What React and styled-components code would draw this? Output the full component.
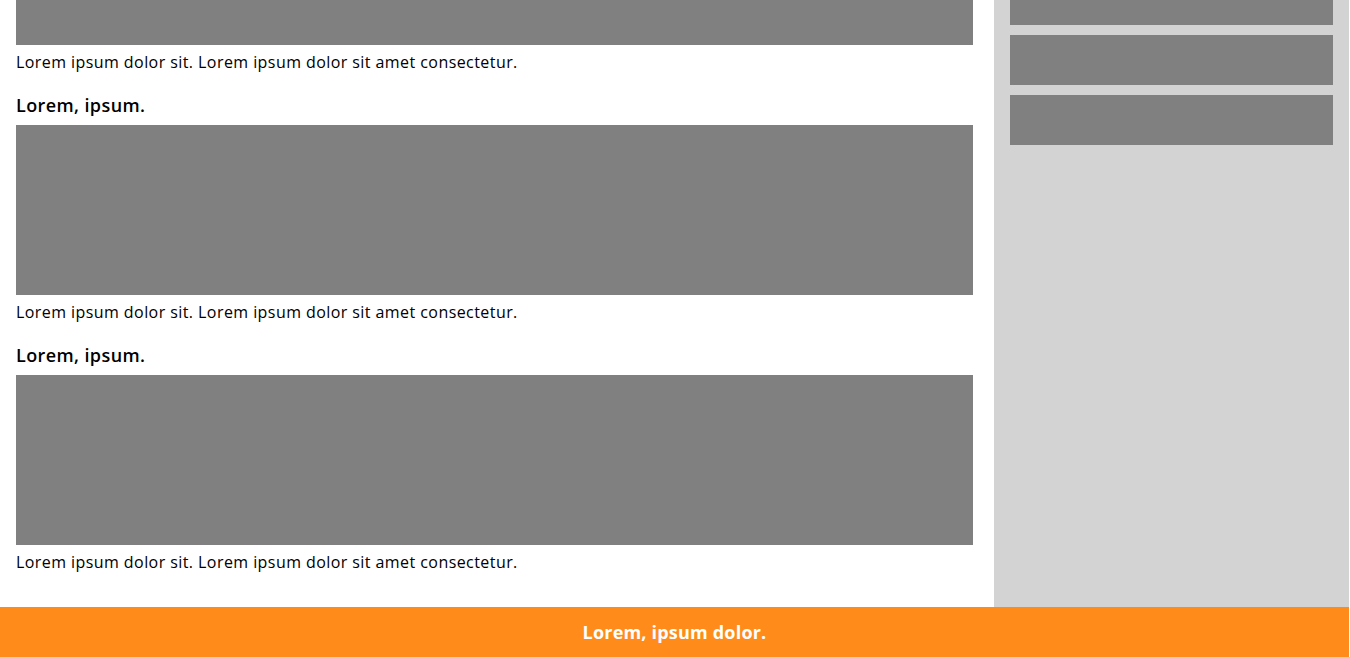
import styled, { createGlobalStyle } from 'styled-components'

const GlobalStyle = createGlobalStyle`
	* {
		box-sizing: border-box;
		margin: 0;
		padding: 0;
	}
	body {
		background: #fff;
		font-family: 'Open Sans', 'Liberation Sans', sans-serif;
		color: #000;
	}
`

const sections = [1, 2]

const App = () => {
	return (
		<Page>
			<GlobalStyle />
			<Layout>
				<Main>
					<Block height="45px" />
					<Caption>Lorem ipsum dolor sit. Lorem ipsum dolor sit amet consectetur.</Caption>
					{sections.map((s) => (
						<section key={s}>
							<Heading>Lorem, ipsum.</Heading>
							<Block height="170px" />
							<Caption>Lorem ipsum dolor sit. Lorem ipsum dolor sit amet consectetur.</Caption>
						</section>
					))}
				</Main>
				<Sidebar>
					<Tile height="25px" />
					<Tile />
					<Tile />
				</Sidebar>
			</Layout>
			<Footer>Lorem, ipsum dolor.</Footer>
		</Page>
	)
}

const Page = styled.div`
	width: 1349px;
	display: flex;
	flex-direction: column;
`

const Layout = styled.div`
	display: flex;
	height: 607px;
`

const Main = styled.main`
	width: 994px;
	padding: 0 21px 0 16px;
`

const Block = styled.div`
	background: #808080;
	height: ${(p) => p.height};
`

const Caption = styled.p`
	font-size: 16px;
	line-height: 24px;
	padding-top: 5px;
	letter-spacing: 0.43px;
`

const Heading = styled.h3`
	font-size: 18px;
	font-weight: 600;
	line-height: 27px;
	margin: 18px 0 6px;
	letter-spacing: 0.4px;
`

const Sidebar = styled.aside`
	flex: 1;
	background: #d3d3d3;
	padding: 0 16px;
	display: flex;
	flex-direction: column;
	gap: 10px;
`

const Tile = styled.div`
	background: #808080;
	height: ${(p) => p.height || '50px'};
`

const Footer = styled.footer`
	height: 50px;
	background: #ff8c1a;
	color: #fff;
	font-size: 18px;
	font-weight: 700;
	display: flex;
	align-items: center;
	justify-content: center;
	letter-spacing: 0.2px;
`

export default App
